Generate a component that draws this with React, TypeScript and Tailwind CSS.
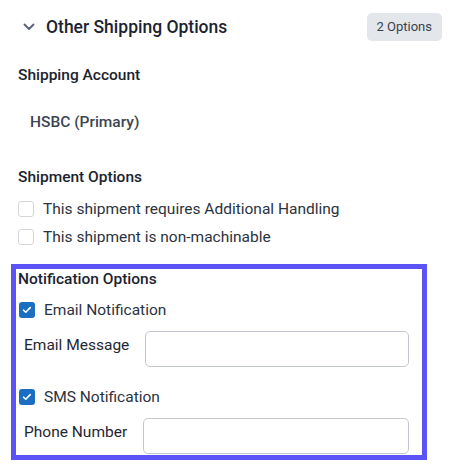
const FONT = { fontFamily: "Roboto, 'Noto Sans', sans-serif" };

function Checkbox({ checked }: { checked?: boolean }) {
	if (checked) {
		return (
			<span className="flex h-[16px] w-[16px] shrink-0 items-center justify-center rounded-[3px] bg-[#1b6ec2]">
				<svg viewBox="0 0 16 16" className="h-[12px] w-[12px]" fill="none">
					<path
						d="M3.5 8.3l2.8 2.7 6-6.2"
						stroke="white"
						strokeWidth="2.2"
						strokeLinecap="round"
						strokeLinejoin="round"
					/>
				</svg>
			</span>
		);
	}
	return (
		<span className="h-[16px] w-[16px] shrink-0 rounded-[3px] border border-[#d3d7dc] bg-white" />
	);
}

function CheckRow({ label, checked }: { label: string; checked?: boolean }) {
	return (
		<label className="flex h-[20px] items-center gap-[9px] text-[15.5px] leading-[20px] text-[#2b3340]">
			<Checkbox checked={checked} />
			<span>{label}</span>
		</label>
	);
}

function FieldRow({ label }: { label: string }) {
	return (
		<div className="flex items-start gap-[16px] pl-[6px] pr-[11px]">
			<span className="mt-[4px] text-[15.5px] leading-[20px] text-[#1f2733]">
				{label}
			</span>
			<input
				type="text"
				className="h-[36px] flex-1 rounded-[5px] border border-[#c3c8ce] bg-white outline-none"
			/>
		</div>
	);
}

export default function App() {
	return (
		<div className="h-[470px] w-[454px] bg-white pt-[13px]" style={FONT}>
			<div className="flex h-[28px] items-center justify-between pl-[23px] pr-[12px]">
				<div className="flex items-center gap-[11px]">
					<svg viewBox="0 0 12 8" className="h-[8px] w-[12px]" fill="none">
						<path
							d="M1.5 1.5L6 6l4.5-4.5"
							stroke="#5f6774"
							strokeWidth="2"
							strokeLinecap="round"
							strokeLinejoin="round"
						/>
					</svg>
					<span className="text-[17.5px] font-medium leading-[28px] text-[#1c2330]">
						Other Shipping Options
					</span>
				</div>
				<span className="flex h-[28px] items-center rounded-[5px] bg-[#e3e6ea] px-[10px] text-[13px] text-[#3a4250]">
					2 Options
				</span>
			</div>

			<div className="px-[18px]">
				<p className="mt-[24px] text-[15.5px] font-medium leading-[20px] text-[#1c2330]">
					Shipping Account
				</p>
				<p className="mt-[27px] pl-[12px] text-[15.5px] font-medium leading-[20px] text-[#3d4552]">
					HSBC (Primary)
				</p>

				<p className="mt-[35px] text-[15.5px] font-medium leading-[20px] text-[#1c2330]">
					Shipment Options
				</p>
				<div className="mt-[12px] flex flex-col gap-[8px]">
					<CheckRow label="This shipment requires Additional Handling" />
					<CheckRow label="This shipment is non-machinable" />
				</div>

				<section className="-ml-[7px] mr-[9px] mt-[17px] border-[5px] border-[#5b53f5] px-[2px] pb-[1px]">
					<p className="text-[15.5px] font-medium leading-[20px] text-[#1c2330]">
						Notification Options
					</p>
					<div className="mt-[11px] pl-[1px]">
						<CheckRow label="Email Notification" checked />
					</div>
					<div className="mt-[11px]">
						<FieldRow label="Email Message" />
					</div>
					<div className="mt-[20px] pl-[1px]">
						<CheckRow label="SMS Notification" checked />
					</div>
					<div className="mt-[11px]">
						<FieldRow label="Phone Number" />
					</div>
				</section>
			</div>
		</div>
	);
}
